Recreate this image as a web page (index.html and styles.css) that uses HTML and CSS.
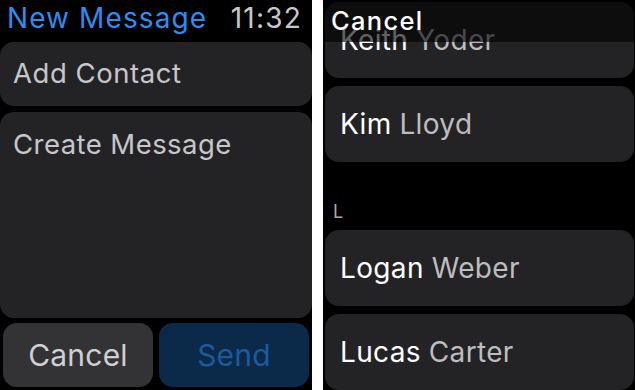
FILE: index.html
```html
<!DOCTYPE html>
<html lang="en">
<head>
<meta charset="utf-8">
<title>New Message</title>
<link rel="stylesheet" href="styles.css">
</head>
<body>
  <section class="screen compose">
    <header class="compose-head">
      <h1 class="title">New Message</h1>
      <span class="clock">11:32</span>
    </header>
    <div class="card field">Add Contact</div>
    <div class="card message">Create Message</div>
    <div class="actions">
      <button class="btn btn-cancel">Cancel</button>
      <button class="btn btn-send">Send</button>
    </div>
  </section>

  <section class="screen contacts">
    <header class="contacts-head">Cancel</header>
    <ul class="list">
      <li class="card contact contact-first"><span class="first">Keith</span> <span class="last">Yoder</span></li>
      <li class="card contact"><span class="first">Kim</span> <span class="last">Lloyd</span></li>
      <li class="section-label">L</li>
      <li class="card contact"><span class="first">Logan</span> <span class="last">Weber</span></li>
      <li class="card contact"><span class="first">Lucas</span> <span class="last">Carter</span></li>
    </ul>
  </section>
</body>
</html>
```

FILE: styles.css
```css
* { box-sizing: border-box; }

html, body {
  margin: 0;
  padding: 0;
}

body {
  background: #ffffff;
  width: 635px;
  height: 390px;
  display: flex;
  gap: 11px;
  overflow: hidden;
  font-family: "Inter", "Noto Sans", sans-serif;
}

.screen {
  width: 312px;
  height: 390px;
  background: #000;
  overflow: hidden;
}

.card {
  background: #232325;
  border-radius: 14px;
}

/* ---------- left: compose ---------- */
.compose {
  display: flex;
  flex-direction: column;
}

.compose-head {
  height: 42px;
  padding: 4px 11px 0 7px;
  display: flex;
  justify-content: space-between;
  align-items: flex-start;
}

.title {
  margin: 0;
  font-size: 28px;
  font-weight: 400;
  line-height: 1;
  letter-spacing: 1.1px;
  color: #2b8ef0;
}

.clock {
  font-size: 28px;
  line-height: 1;
  letter-spacing: 1.2px;
  margin-right: -1px;
  color: #c8c8cb;
}

.field {
  height: 64px;
  padding-left: 13px;
  display: flex;
  align-items: center;
  font-size: 27.5px;
  line-height: 1;
  letter-spacing: 0.55px;
  color: #c6c6cb;
}

.message {
  margin-top: 6px;
  height: 206px;
  padding: 19px 0 0 13px;
  font-size: 27.5px;
  line-height: 1;
  letter-spacing: 0.45px;
  color: #c6c6cb;
}

.actions {
  margin-top: 5px;
  padding-left: 3px;
  display: flex;
  gap: 6px;
}

.btn {
  width: 150px;
  height: 64px;
  border: 0;
  border-radius: 14px;
  font-family: inherit;
  font-size: 30px;
  line-height: 1;
  letter-spacing: 0.2px;
  padding: 0;
}

.btn-cancel {
  background: #333335;
  color: #d0d0d4;
}

.btn-send {
  background: #0b2a4a;
  color: #1c5b99;
}

/* ---------- right: contacts ---------- */
.contacts {
  position: relative;
}

.contacts-head {
  position: absolute;
  top: 0;
  left: 0;
  right: 0;
  height: 42px;
  padding: 8px 0 0 8px;
  background: rgba(0, 0, 0, 0.62);
  color: #ffffff;
  font-size: 25.5px;
  font-weight: 500;
  line-height: 1;
  letter-spacing: 1.3px;
  z-index: 1;
}

.list {
  list-style: none;
  margin: 0;
  padding: 2px 1px 0 2px;
  display: flex;
  flex-direction: column;
  gap: 8px;
}

.contact {
  height: 76px;
  padding-left: 15px;
  display: flex;
  align-items: center;
  gap: 0.28em;
  font-size: 28px;
  line-height: 1;
  letter-spacing: 0.35px;
}

.first { color: #ffffff; }
.last { color: #bdbdbf; }

.section-label {
  height: 68px;
  padding: 41px 0 0 8px;
  margin-bottom: -8px;
  margin-top: -8px;
  font-size: 18px;
  line-height: 1;
  color: #a8a8ab;
}
```
